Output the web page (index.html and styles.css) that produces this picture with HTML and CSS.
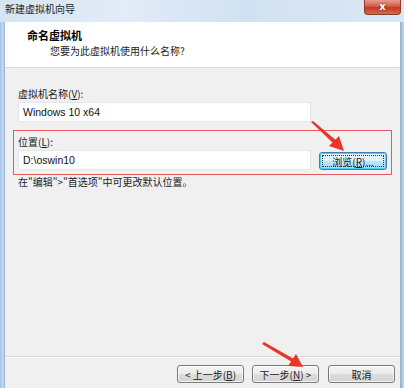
FILE: index.html
```html
<!DOCTYPE html>
<html lang="zh-CN">
<head>
  <meta charset="UTF-8">
  <title>新建虚拟机向导</title>
  <link rel="stylesheet" href="styles.css">
</head>
<body>
  <div class="window">
    <!-- Title bar -->
    <div class="titlebar">
      <span class="title-text">新建虚拟机向导</span>
      <div class="close-btn">x</div>
    </div>

    <div class="frame">
      <div class="frame-side frame-left"></div>

      <div class="client">
        <div class="wizard-header">
          <div class="header-title">命名虚拟机</div>
          <div class="header-sub">您要为此虚拟机使用什么名称?</div>
        </div>

        <div class="wizard-body">
          <div class="field-label">虚拟机名称(<u>V</u>):</div>
          <div class="text-input">Windows 10 x64</div>

          <div class="mark-box">
            <div class="field-label">位置(<u>L</u>):</div>
            <div class="input-row">
              <div class="text-input">D:\oswin10</div>
              <button class="btn btn-focus"><span class="focus-ring">浏览(<u>R</u>)...</span></button>
            </div>
          </div>

          <div class="hint">在"编辑"&gt;"首选项"中可更改默认位置。</div>
        </div>

        <div class="wizard-footer">
          <button class="btn btn-nav">&lt; 上一步(<u>B</u>)</button>
          <button class="btn btn-nav">下一步(<u>N</u>) &gt;</button>
          <button class="btn btn-nav btn-cancel">取消</button>
        </div>
      </div>

      <div class="frame-side frame-right"></div>
    </div>

    <!-- Annotation arrows -->
    <svg class="arrows" width="404" height="388" viewBox="0 0 404 388">
      <polygon points="311,122 313,121 337,141 334,144" fill="#e8362b"/>
      <polygon points="344,151 329,146 339,136" fill="#e8362b"/>
      <polygon points="262,344 264,342 294,359 292,362" fill="#e8362b"/>
      <polygon points="303,367 288,366 296,354" fill="#e8362b"/>
    </svg>
  </div>
</body>
</html>
```

FILE: styles.css
```css
* {
  margin: 0;
  padding: 0;
  box-sizing: border-box;
}

body {
  font-family: 'Liberation Sans', 'Noto Sans CJK SC', sans-serif;
  font-size: 10px;
  color: #1a1a1a;
  background: #f0f0f0;
  overflow: hidden;
}

.window {
  position: relative;
  width: 404px;
  height: 388px;
  display: flex;
  flex-direction: column;
  background: #cfe0f2;
}

.titlebar {
  height: 22px;
  display: flex;
  align-items: flex-start;
  padding-left: 5px;
  background: linear-gradient(90deg, #d6e4f3 0%, #e2ecf7 30%, #d2e1f1 60%, #dbe7f4 100%);
}

.title-text {
  font-family: 'Noto Sans CJK SC', sans-serif;
  font-size: 10px;
  line-height: 18px;
  color: #222;
}

.close-btn {
  margin-left: auto;
  margin-right: 3px;
  width: 37px;
  height: 15px;
  border: 1px solid #8c3a2c;
  border-top: none;
  border-radius: 0 0 4px 4px;
  background: linear-gradient(#e99c8e 0%, #d55a45 45%, #c23a24 55%, #d46a50 100%);
  color: #fff;
  font-family: 'DejaVu Sans', sans-serif;
  font-weight: bold;
  font-size: 10px;
  line-height: 13px;
  text-align: center;
  text-shadow: 0 0 2px #6a1a10;
}

.frame {
  flex: 1;
  display: flex;
}

.frame-side {
  width: 5px;
}

.frame-left {
  background: linear-gradient(90deg, #9fc2e6, #c6dcf2 60%, #8eaccc);
}

.frame-right {
  width: 4px;
  background: linear-gradient(90deg, #8eaccc, #c6dcf2);
}

.client {
  flex: 1;
  display: flex;
  flex-direction: column;
  background: #f0f0f0;
}

.wizard-header {
  height: 46px;
  background: #fff;
  border-bottom: 1px solid #d6d6d6;
  padding: 6px 0 0 22px;
  font-family: 'Noto Sans CJK SC', sans-serif;
}

.header-title {
  font-size: 11px;
  font-weight: bold;
  line-height: 14px;
  color: #000;
}

.header-sub {
  font-size: 10px;
  line-height: 15px;
  padding-left: 23px;
  margin-top: 1px;
  color: #222;
}

.wizard-body {
  flex: 1;
  padding: 19px 0 0 13px;
  border-bottom: 1px solid #d9d9d9;
}

.field-label {
  font-family: 'Noto Sans CJK SC', sans-serif;
  font-size: 10px;
  line-height: 14px;
  margin-bottom: 1px;
}

.text-input {
  width: 293px;
  height: 20px;
  background: #fff;
  border: 1px solid #e3e6ec;
  padding-left: 4px;
  line-height: 18px;
  font-size: 10.5px;
  color: #111;
}

.mark-box {
  width: 379px;
  margin: 8px 0 0 -5px;
  border: 1px solid #e45a60;
  padding: 4px 0 4px 4px;
}

.input-row {
  display: flex;
  align-items: center;
  gap: 8px;
}

.hint {
  font-family: 'Noto Sans CJK SC', sans-serif;
  font-size: 10px;
  line-height: 14px;
  color: #222;
}

.btn {
  font-family: 'Noto Sans CJK SC', sans-serif;
  font-size: 10px;
  height: 18px;
  border: 1px solid #7a7a7a;
  border-radius: 3px;
  background: linear-gradient(#f4f4f4 0%, #ececec 48%, #dcdcdc 52%, #d4d4d4 100%);
  color: #222;
  box-shadow: inset 0 0 0 1px rgba(255, 255, 255, 0.7);
}

.btn-focus {
  width: 68px;
  margin-top: 2px;
  border-color: #3c7fb1;
  background: linear-gradient(#eaf6fd 0%, #d9f0fc 48%, #bee6fd 52%, #a7d9f5 100%);
  box-shadow: inset 0 0 0 1px #48d2f8;
  padding: 2px;
}

.focus-ring {
  display: block;
  height: 12px;
  line-height: 12px;
  border: 1px dotted #333;
}

.wizard-footer {
  height: 31px;
  display: flex;
  justify-content: flex-end;
  align-items: flex-start;
  gap: 8px;
  padding: 7px 5px 0 0;
  border-top: 1px solid #fff;
}

.btn-nav {
  width: 67px;
}

.btn-cancel {
  margin-left: 1px;
}

.arrows {
  position: absolute;
  left: 0;
  top: 0;
  pointer-events: none;
}
```
